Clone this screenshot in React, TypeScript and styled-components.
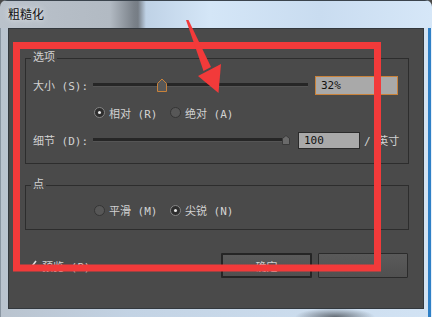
import React from "react";
import styled, { createGlobalStyle } from "styled-components";

const COLORS = {
  PANEL: "#4a4a4a",
  TEXT: "#d2d2d2",
  LINE: "#2d2d2d",
  FIELD: "#a9a9a9",
  ACCENT: "#c9823a",
  MARK: "#f23a3a",
};

const UI_FONT = `"DejaVu Sans Mono", "Noto Sans CJK SC", monospace`;

const GlobalStyle = createGlobalStyle`
  html, body {
    margin: 0;
    padding: 0;
    background: #4a4a4a;
  }
  * {
    box-sizing: border-box;
  }
`;

const Window = styled.div`
  position: relative;
  width: 432px;
  height: 317px;
  display: flex;
  flex-direction: column;
  overflow: hidden;
  border-radius: 7px 7px 0 0;
  background:
    radial-gradient(40px 9px at 335px 317px, rgba(55, 60, 66, 0.7), rgba(55, 60, 66, 0)),
    linear-gradient(to right, #b9c3ce 0%, #c3d3e4 30%, #d2e3f4 100%);
  box-shadow:
    inset 0 1px 0 #3b444d,
    inset -1px 0 0 #e6eff9,
    inset -4px 0 0 #2f80c6,
    inset 1px 0 0 #8a96a2;
`;

const TitleBar = styled.div`
  height: 28px;
  flex: none;
  padding: 5px 0 0 8px;
  background: linear-gradient(
    to right,
    #bac2cb 0px,
    #b2bac3 110px,
    #7a8189 134px,
    #767d85 138px,
    #bfd2e6 146px,
    #d4e6f7 210px,
    #c9dcf0 320px,
    #d6e7f8 432px
  );
  box-shadow: inset 0 1px 0 #3b444d;
`;

const Title = styled.span`
  font-family: "Noto Sans CJK SC", sans-serif;
  font-size: 12px;
  line-height: 18px;
  color: #111;
  text-shadow: 0 0 6px rgba(255, 255, 255, 0.9);
`;

const Client = styled.div`
  flex: 1;
  margin: 0 8px 8px;
  display: flex;
  flex-direction: column;
  padding: 23px 15px 0 17px;
  background: ${COLORS.PANEL};
  box-shadow: inset 0 0 0 1px #33383d;
  font-family: ${UI_FONT};
  font-size: 11px;
  color: ${COLORS.TEXT};
`;

const Group = styled.fieldset<{ $pad: string; $gap?: number }>`
  margin: ${(p) => p.$gap ?? 0}px 0 0;
  width: 384px;
  padding: ${(p) => p.$pad};
  border: 1px solid ${COLORS.LINE};
  min-inline-size: 0;
`;

const Legend = styled.legend`
  padding: 0 2px;
  margin-left: -2px;
  line-height: 14px;
  font-size: 11px;
  color: ${COLORS.TEXT};
`;

const Row = styled.div<{ $height: number; $gap?: number; $indent?: number }>`
  display: flex;
  align-items: center;
  height: ${(p) => p.$height}px;
  margin-top: ${(p) => p.$gap ?? 0}px;
  padding-left: ${(p) => p.$indent ?? 0}px;
  white-space: nowrap;
`;

const Label = styled.span`
  width: 60px;
  flex: none;
`;

const Track = styled.div<{ $width: number }>`
  position: relative;
  width: ${(p) => p.$width}px;
  height: 14px;
  flex: none;
  &::before {
    content: "";
    position: absolute;
    left: 0;
    right: 0;
    top: 5px;
    height: 3px;
    background: #262626;
    border-bottom: 1px solid #555;
  }
`;

const Knob = styled.svg`
  position: absolute;
  top: 50%;
  transform: translateY(-50%);
`;

const Field = styled.div<{ $width: number; $focused?: boolean }>`
  width: ${(p) => p.$width}px;
  height: ${(p) => (p.$focused ? 19 : 17)}px;
  margin-left: ${(p) => (p.$focused ? 7 : 8)}px;
  flex: none;
  display: flex;
  align-items: center;
  padding-left: 5px;
  background: ${COLORS.FIELD};
  border: 1px solid ${(p) => (p.$focused ? COLORS.ACCENT : "#2b2b2b")};
  color: #111;
  font-size: 11px;
`;

const Unit = styled.span`
  margin-left: 4px;
`;

const RadioItem = styled.label`
  width: 76px;
  display: flex;
  align-items: center;
  gap: 4px;
`;

const RadioDot = styled.span<{ $checked?: boolean }>`
  width: 11px;
  height: 11px;
  border-radius: 50%;
  display: flex;
  align-items: center;
  justify-content: center;
  border: 1px solid ${(p) => (p.$checked ? "#858585" : "#353535")};
  background: ${(p) => (p.$checked ? "#2e2e2e" : "#575757")};
  &::after {
    content: "";
    display: ${(p) => (p.$checked ? "block" : "none")};
    width: 3px;
    height: 3px;
    border-radius: 50%;
    background: #eaeaea;
  }
`;

const Footer = styled.div`
  margin-top: 23px;
  height: 25px;
  display: flex;
  align-items: center;
  justify-content: space-between;
  padding-right: 1px;
`;

const Check = styled.label`
  display: flex;
  align-items: center;
  gap: 5px;
`;

const Buttons = styled.div`
  display: flex;
  gap: 6px;
`;

const Button = styled.button<{ $width: number; $default?: boolean }>`
  width: ${(p) => p.$width}px;
  height: 25px;
  padding: 0;
  font-family: ${UI_FONT};
  font-size: 11px;
  color: ${COLORS.TEXT};
  background: linear-gradient(#5a5a5a, #505050);
  border: ${(p) => (p.$default ? "2px solid #252525" : "1px solid #2b2b2b")};
  border-radius: 1px;
`;

const Annotation = styled.svg`
  position: absolute;
  left: 0;
  top: 0;
  pointer-events: none;
`;

type SliderProps = {
  width: number;
  value: number;
  accent?: boolean;
};

const Slider: React.FC<SliderProps> = ({ width, value, accent }) => {
  const size = accent ? 12 : 8;
  const left = Math.min(Math.round((width * value) / 100 - size / 2), width - size);
  return (
    <Track $width={width}>
      {accent ? (
        <Knob width={12} height={14} viewBox="0 0 12 14" style={{ left }}>
          <polygon
            points="1.5,13.5 1.5,5.5 6,1 10.5,5.5 10.5,13.5"
            fill="#585858"
            stroke={COLORS.ACCENT}
          />
        </Knob>
      ) : (
        <Knob width={8} height={10} viewBox="0 0 8 10" style={{ left }}>
          <polygon points="0.5,9.5 0.5,3.5 4,0.5 7.5,3.5 7.5,9.5" fill="#6a6a6a" stroke="#3a3a3a" />
        </Knob>
      )}
    </Track>
  );
};

type RadioProps = { label: string; checked?: boolean };

const Radio: React.FC<RadioProps> = ({ label, checked }) => (
  <RadioItem>
    <RadioDot $checked={checked} />
    {label}
  </RadioItem>
);

const App: React.FC = () => {
  return (
    <>
      <GlobalStyle />
      <Window>
        <TitleBar>
          <Title>粗糙化</Title>
        </TitleBar>
        <Client>
          <Group $pad="10px 10px 13px 7px">
            <Legend>选项</Legend>
            <Row $height={20}>
              <Label>大小 (S):</Label>
              <Slider width={215} value={32} accent />
              <Field $width={83} $focused>
                32%
              </Field>
            </Row>
            <Row $height={21} $gap={7} $indent={61}>
              <Radio label="相对 (R)" checked />
              <Radio label="绝对 (A)" />
            </Row>
            <Row $height={20} $gap={7}>
              <Label>细节 (D):</Label>
              <Slider width={197} value={100} />
              <Field $width={62}>100</Field>
              <Unit>/ 英寸</Unit>
            </Row>
          </Group>

          <Group $pad="8px 10px 9px 7px" $gap={14}>
            <Legend>点</Legend>
            <Row $height={20} $indent={61}>
              <Radio label="平滑 (M)" />
              <Radio label="尖锐 (N)" checked />
            </Row>
          </Group>

          <Footer>
            <Check>
              <svg width={12} height={11} viewBox="0 0 12 11">
                <path d="M1 6 L4.5 9.5 L11 1" fill="none" stroke="#dcdcdc" strokeWidth={1.6} />
              </svg>
              预览 (P)
            </Check>
            <Buttons>
              <Button $width={91} $default>
                确定
              </Button>
              <Button $width={90} />
            </Buttons>
          </Footer>
        </Client>

        <Annotation width={432} height={317} viewBox="0 0 432 317">
          <rect x={16.5} y={45.5} width={361} height={222.5} fill="none" stroke={COLORS.MARK} strokeWidth={7} />
          <polygon points="186,20 188.5,20 211,67 203.5,71" fill={COLORS.MARK} />
          <polygon points="198,76 221,64 218.5,93" fill={COLORS.MARK} />
        </Annotation>
      </Window>
    </>
  );
};

export default App;
